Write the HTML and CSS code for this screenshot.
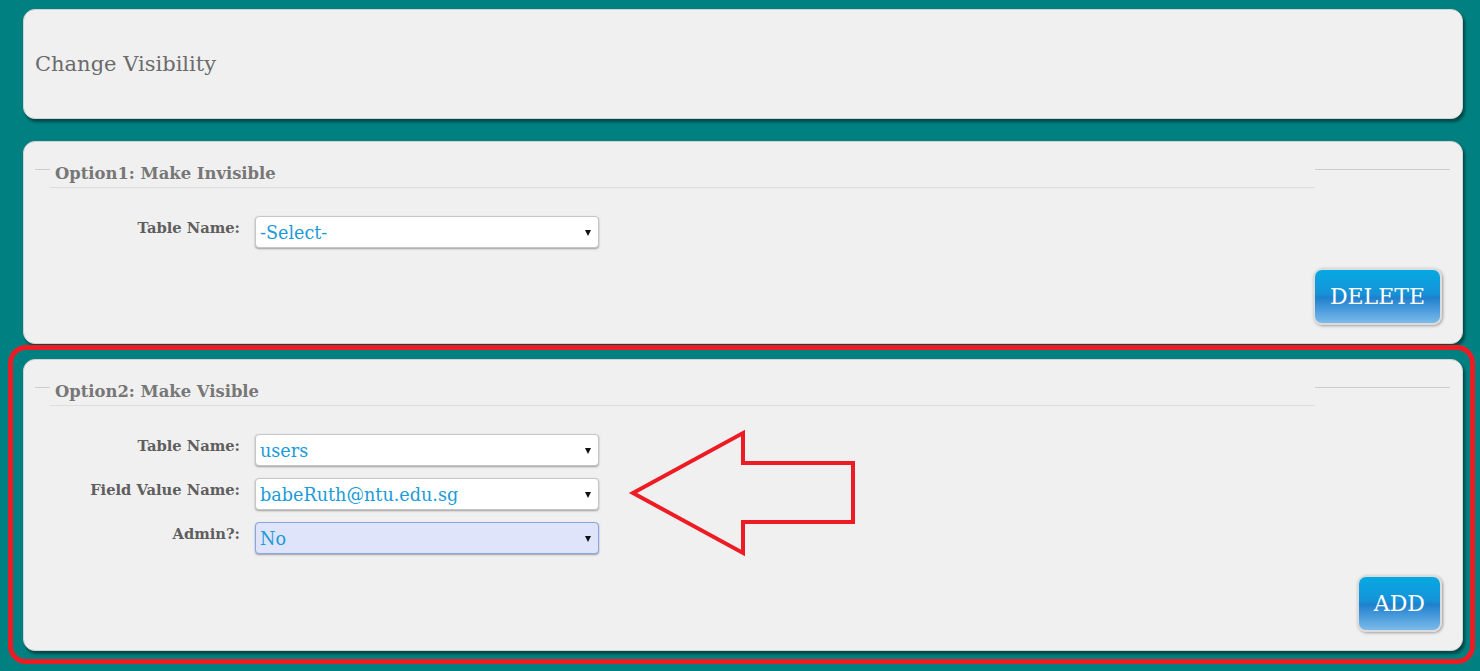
FILE: index.html
```html
<!DOCTYPE html>
<html lang="en">
<head>
<meta charset="utf-8">
<title>Change Visibility</title>
<link rel="stylesheet" href="styles.css">
</head>
<body>
  <div class="panel title-panel">
    <h1 class="title">Change Visibility</h1>
  </div>

  <div class="panel form-panel">
    <div class="legend-row">
      <span class="rule rule-left"></span>
      <div class="legend">Option1: Make Invisible</div>
      <span class="rule rule-right"></span>
    </div>
    <div class="rows">
      <div class="row">
        <label class="label">Table Name:</label>
        <div class="select"><select><option>-Select-</option></select></div>
      </div>
    </div>
    <div class="actions"><button class="btn">DELETE</button></div>
  </div>

  <div class="highlight">
    <div class="panel form-panel">
      <div class="legend-row">
        <span class="rule rule-left"></span>
        <div class="legend">Option2: Make Visible</div>
        <span class="rule rule-right"></span>
      </div>
      <div class="rows">
        <div class="row">
          <label class="label">Table Name:</label>
          <div class="select"><select><option>users</option></select></div>
        </div>
        <div class="row">
          <label class="label">Field Value Name:</label>
          <div class="select"><select><option>babeRuth@ntu.edu.sg</option></select></div>
        </div>
        <div class="row">
          <label class="label">Admin?:</label>
          <div class="select select-focus"><select><option>No</option></select></div>
        </div>
      </div>
      <div class="actions actions-add"><button class="btn">ADD</button></div>
    </div>
  </div>

  <svg class="arrow" width="230" height="130" viewBox="0 0 230 130">
    <polygon points="5,65 115,5 115,35 225,35 225,94 115,94 115,125" fill="none" stroke="#ed1c24" stroke-width="4" stroke-linejoin="miter"/>
  </svg>
</body>
</html>
```

FILE: styles.css
```css
html, body {
  margin: 0;
  height: 671px;
  overflow: hidden;
}

body {
  background: #008080;
  padding-top: 9px;
  box-sizing: border-box;
  font-family: "DejaVu Serif", "Liberation Serif", serif;
  position: relative;
}

.panel {
  background: #f0f0f0;
  border: 1px solid #d2d2d2;
  border-radius: 12px;
  box-shadow: 2px 3px 3px rgba(0, 0, 0, 0.45);
  margin: 0 17px 0 23px;
}

.title-panel {
  height: 108px;
  display: flex;
  align-items: center;
  padding-left: 11px;
}

.title {
  margin: 0;
  font-size: 21px;
  font-weight: normal;
  color: #6b6b6b;
}

.form-panel {
  margin-top: 22px;
  padding: 18px 12px 18px 11px;
}

.highlight {
  margin: 1px 5px 0 8px;
  border: 5px solid #ed1c24;
  border-radius: 18px;
  padding: 9px 0 8px 0;
}

.highlight .form-panel {
  margin: 0 7px 0 10px;
  padding-bottom: 18px;
}

.legend-row {
  display: flex;
  align-items: flex-start;
  height: 28px;
}

.rule {
  height: 1px;
  background: #cccccc;
  margin-top: 9px;
}

.rule-left {
  width: 15px;
}

.rule-right {
  flex: 1;
}

.legend {
  width: 1260px;
  padding-left: 5px;
  height: 27px;
  line-height: 28px;
  border-bottom: 1px solid #dedede;
  font-size: 16.4px;
  font-weight: bold;
  color: #777777;
  white-space: nowrap;
}

.rows {
  margin-top: 28px;
  display: flex;
  flex-direction: column;
  gap: 12px;
}

.row {
  display: flex;
  align-items: flex-start;
  gap: 15px;
}

.label {
  width: 205px;
  text-align: right;
  font-size: 14.7px;
  font-weight: bold;
  color: #5e5e5e;
  padding-top: 3px;
}

.select {
  position: relative;
  width: 344px;
  height: 32px;
  box-sizing: border-box;
  background: #ffffff;
  border: 1px solid #c6c6c6;
  border-radius: 4px;
  box-shadow: 0 1px 2px rgba(0, 0, 0, 0.35);
}

.select select {
  appearance: none;
  -webkit-appearance: none;
  border: 0;
  background: transparent;
  width: 100%;
  height: 100%;
  padding: 2px 0 0 4px;
  margin: 0;
  font-family: "DejaVu Serif", "Liberation Serif", serif;
  font-size: 17.6px;
  color: #1b9bd8;
  outline: none;
}

.select::after {
  content: "";
  position: absolute;
  right: 7px;
  top: 13px;
  border-left: 3.5px solid transparent;
  border-right: 3.5px solid transparent;
  border-top: 6px solid #111111;
  pointer-events: none;
}

.select-focus {
  background: #e0e4fb;
  border-color: #86a6e4;
}

.actions {
  margin-top: 20px;
  display: flex;
  justify-content: flex-end;
  padding-right: 8px;
}

.actions-add {
  margin-top: 21px;
}

.btn {
  height: 57px;
  padding: 0 15px;
  border: 2px solid #dcdcdc;
  border-radius: 9px;
  background: linear-gradient(to bottom, #05a9e2 0%, #1693d8 45%, #1f80cc 52%, #4a9cdc 75%, #7cbbea 100%);
  box-shadow: 1px 1px 3px rgba(0, 0, 0, 0.35);
  color: #ffffff;
  font-family: "DejaVu Serif", "Liberation Serif", serif;
  font-size: 22px;
}

.arrow {
  position: absolute;
  left: 628px;
  top: 428px;
}
```
